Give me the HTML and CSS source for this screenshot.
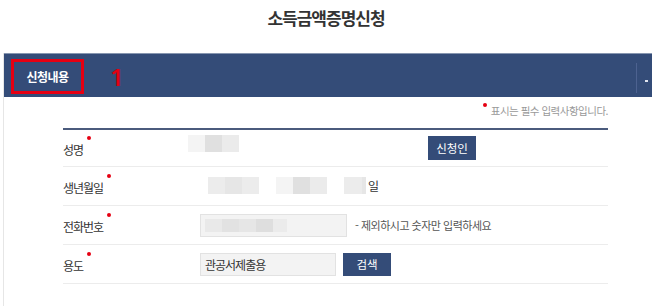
FILE: index.html
```html
<!DOCTYPE html>
<html lang="ko">
<head>
  <meta charset="UTF-8" />
  <meta name="viewport" content="width=device-width, initial-scale=1.0"/>
  <title>소득금액증명신청</title>
  <link rel="stylesheet" href="styles.css">
</head>
<body>
  <h1 class="page-title">소득금액증명신청</h1>

  <div class="apply-section">
    <!-- Section tab bar -->
    <div class="section-head">
      <div class="tab active">신청내용</div>
      <span class="step-no">1</span>
      <span class="tab-divider"></span>
      <span class="tab-cut"></span>
    </div>

    <div class="section-body">
      <p class="req-note"><span class="req-dot"></span>표시는 필수 입력사항입니다.</p>

      <div class="form-table">
        <!-- 성명 -->
        <div class="form-row">
          <div class="label"><span class="req">성명</span></div>
          <div class="value name-cell">
            <span class="blur b1"></span><span class="blur b2"></span><span class="blur b3"></span>
            <button class="btn btn-self">신청인</button>
          </div>
        </div>

        <!-- 생년월일 -->
        <div class="form-row">
          <div class="label"><span class="req">생년월일</span></div>
          <div class="value birth-cell">
            <span class="blur b4"></span><span class="blur b5"></span><span class="blur b4"></span>
            <span class="gap"></span>
            <span class="blur b1"></span><span class="blur b2"></span><span class="blur b3"></span>
            <span class="gap"></span>
            <span class="blur b4 wide"></span><span class="blur b5 thin"></span>
            <span class="unit">일</span>
          </div>
        </div>

        <!-- 전화번호 -->
        <div class="form-row">
          <div class="label"><span class="req">전화번호</span></div>
          <div class="value">
            <div class="input phone">
              <span class="blur sm p1"></span><span class="blur sm p2"></span><span class="blur sm p3"></span><span class="blur sm p4"></span><span class="blur sm p5"></span>
            </div>
            <span class="help">- 제외하시고 숫자만 입력하세요</span>
          </div>
        </div>

        <!-- 용도 -->
        <div class="form-row">
          <div class="label"><span class="req">용도</span></div>
          <div class="value">
            <div class="input purpose">관공서제출용</div>
            <button class="btn btn-search">검색</button>
          </div>
        </div>
      </div>
    </div>
  </div>
</body>
</html>
```

FILE: styles.css
```css
body {
  margin: 0;
  background-color: white;
  color: #333;
  font-family: "Noto Sans CJK KR", "Noto Sans", sans-serif;
  overflow: hidden;
}

.page-title {
  margin: 0;
  height: 53px;
  padding-top: 6px;
  box-sizing: border-box;
  font-size: 17px;
  line-height: 24px;
  letter-spacing: -1px;
  font-weight: bold;
  text-align: center;
  color: #333;
}

.apply-section {
  margin-left: 3px;
  border-left: 1px solid #e6e6e6;
  height: 253px;
}

.section-head {
  height: 44px;
  background-color: #344c78;
  border-top: 1px solid #8796b0;
  box-sizing: border-box;
  display: flex;
  align-items: center;
  padding-left: 7px;
  position: relative;
}

.tab {
  width: 73px;
  height: 35px;
  box-sizing: border-box;
  border: 3px solid #e60012;
  color: white;
  font-size: 12px;
  font-weight: bold;
  display: flex;
  align-items: center;
  justify-content: center;
  letter-spacing: -0.5px;
  margin-top: 2px;
}

.step-no {
  color: #e60012;
  font-size: 24px;
  font-weight: 500;
  line-height: 24px;
  font-family: "Noto Sans", "DejaVu Sans", sans-serif;
  margin-left: 26px;
  margin-top: 2px;
  text-shadow: 1px 0 0 #8a1020;
}

.tab-divider {
  position: absolute;
  left: 632px;
  top: 9px;
  width: 1px;
  height: 30px;
  background-color: #4d6290;
}

.tab-cut {
  position: absolute;
  left: 641px;
  top: 26px;
  width: 3px;
  height: 2px;
  background-color: #dfe4ee;
}

.section-body {
  padding: 6px 0 0 59px;
  width: 545px;
}

.req-note {
  margin: 0;
  text-align: right;
  font-size: 10.5px;
  color: #999;
  line-height: 16px;
  letter-spacing: -0.5px;
}

.req-dot {
  display: inline-block;
  width: 4px;
  height: 4px;
  border-radius: 50%;
  background-color: #e60012;
  vertical-align: 8px;
  margin-right: 4px;
}

.form-table {
  margin-top: 9px;
  border-top: 2px solid #4b5b7d;
}

.form-row {
  display: flex;
  height: 39px;
  border-bottom: 1px solid #ececec;
  box-sizing: border-box;
  align-items: center;
}

.form-row:first-child {
  height: 37px;
}

.label {
  width: 125px;
  font-size: 12px;
  letter-spacing: -1px;
  color: #333;
  padding-top: 3px;
}

.req {
  position: relative;
}

.req::after {
  content: "";
  position: absolute;
  right: -8px;
  top: -5px;
  width: 4px;
  height: 4px;
  border-radius: 50%;
  background-color: #e60012;
}

.value {
  display: flex;
  align-items: center;
  flex: 1;
}

.blur {
  display: inline-block;
  width: 17px;
  height: 17px;
}

.blur.sm {
  height: 13px;
}

.b1 { background-color: #f4f4f4; }
.b2 { background-color: #e0e0e0; }
.b3 { background-color: #ebebeb; }
.b4 { background-color: #ececec; }
.b5 { background-color: #e6e6e6; }

.p1 { background-color: #e9e9e9; }
.p2 { background-color: #e2e2e2; }
.p3 { background-color: #e6e6e6; }
.p4 { background-color: #dedede; }
.p5 { background-color: #ebebeb; width: 14px; }

.blur.wide { width: 18px; }
.blur.thin { width: 4px; }

.gap {
  width: 17px;
}

.name-cell .blur {
  margin-top: -10px;
}

.btn-self {
  margin-left: 189px;
}

.birth-cell {
  padding-left: 20px;
  margin-top: -1px;
}

.unit {
  font-size: 12px;
  margin-left: 2px;
}

.input {
  margin-left: 12px;
  height: 23px;
  box-sizing: border-box;
  background-color: #f3f3f3;
  border: 1px solid #e2e2e2;
  display: flex;
  align-items: center;
  padding-left: 4px;
  font-size: 12px;
  color: #333;
  letter-spacing: -1px;
}

.input.phone {
  width: 147px;
}

.input.purpose {
  width: 136px;
}

.help {
  margin-left: 8px;
  font-size: 11px;
  color: #555;
  letter-spacing: -0.5px;
}

.btn {
  width: 48px;
  height: 24px;
  background-color: #344c78;
  color: white;
  border: none;
  border-radius: 0;
  font-family: "Noto Sans CJK KR", sans-serif;
  font-size: 11.5px;
  padding: 0;
  cursor: pointer;
}

.btn-search {
  margin-left: 7px;
  height: 23px;
}
```
